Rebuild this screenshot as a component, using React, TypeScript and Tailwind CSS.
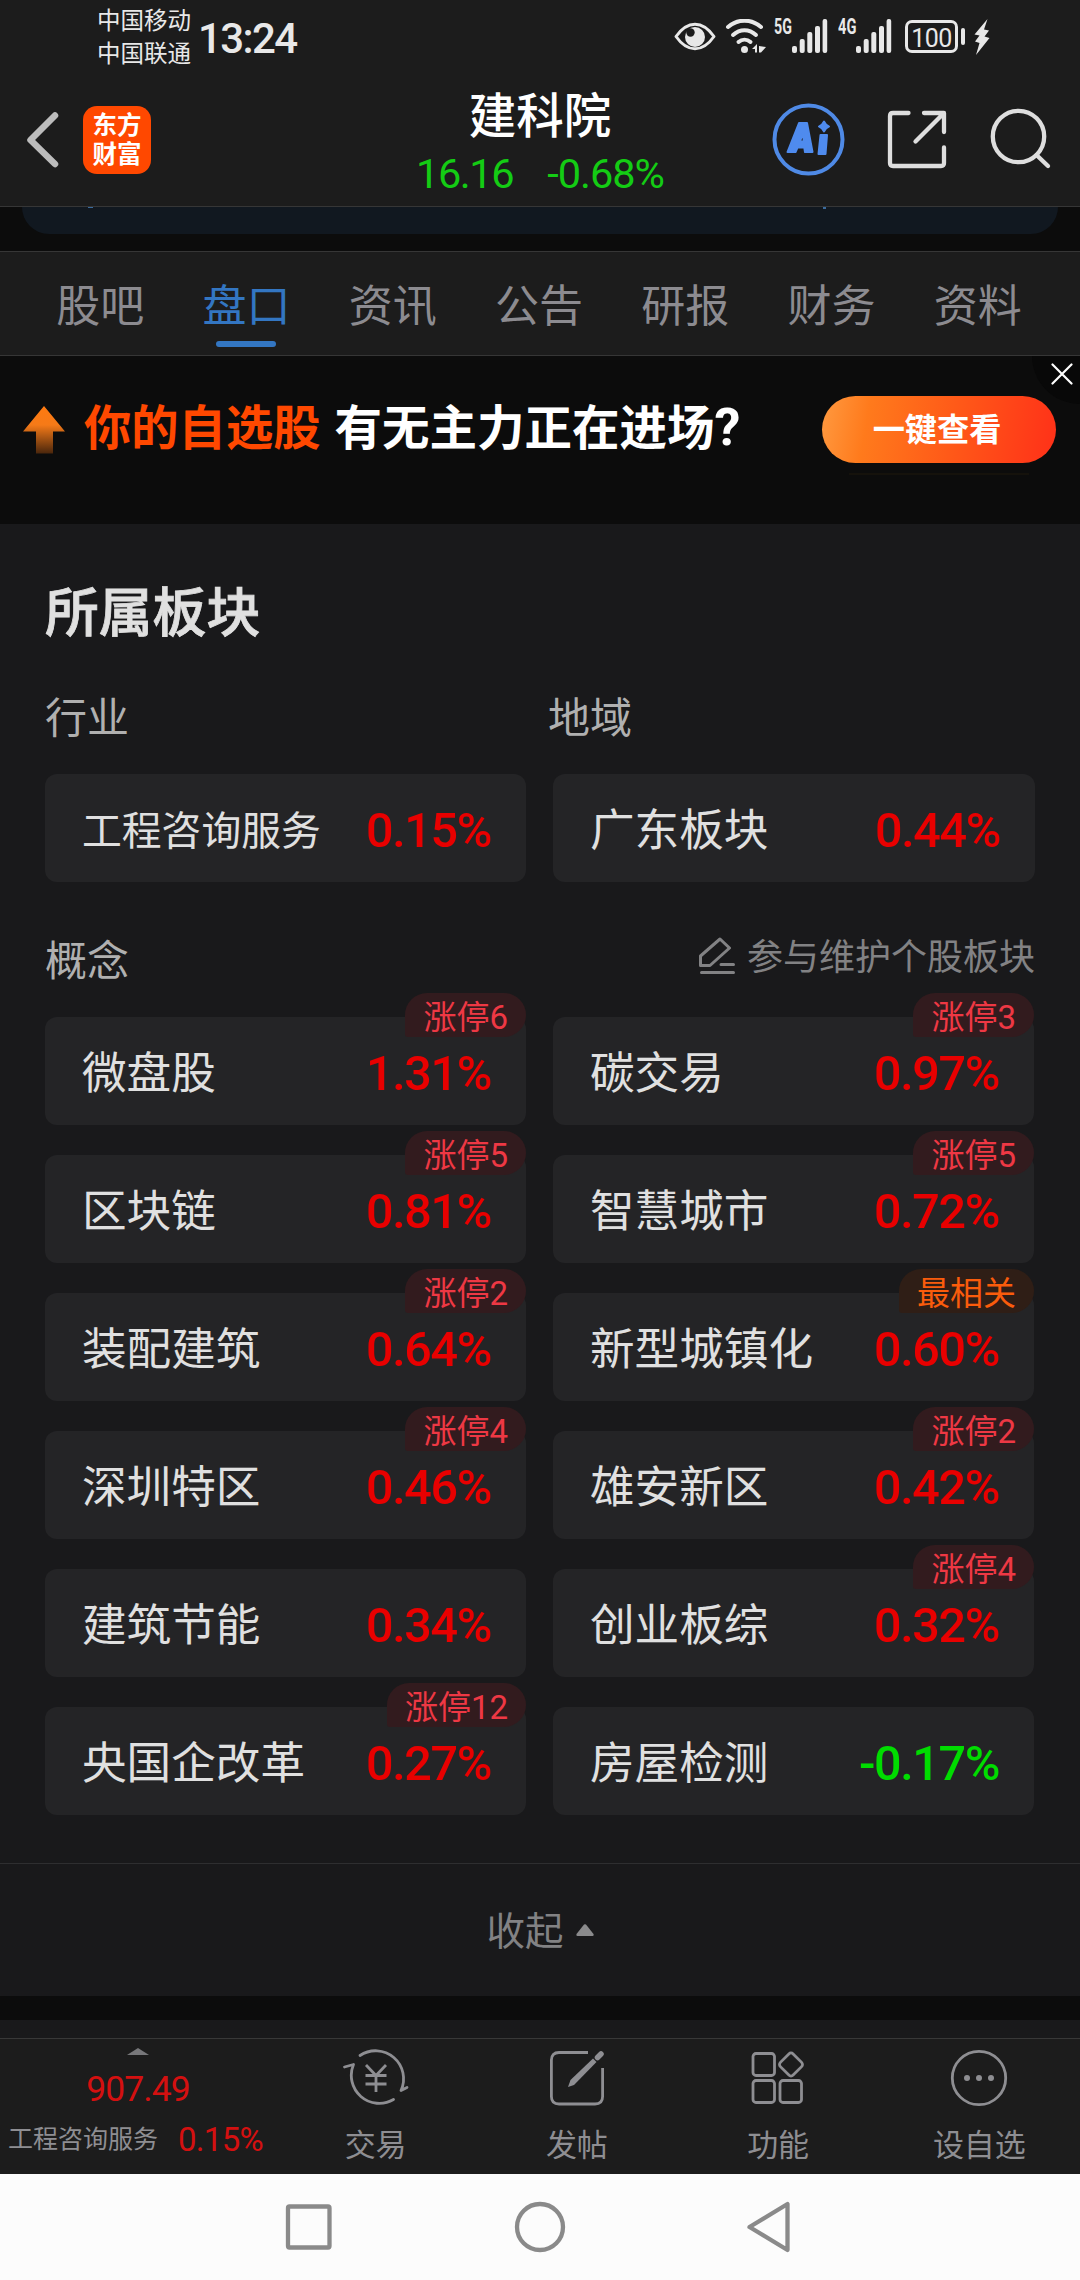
import React from 'react';

type Board = {
  name: string;
  change: string;
  tag?: string;
  hot?: boolean;
};

const tabs = ['股吧', '盘口', '资讯', '公告', '研报', '财务', '资料'];

const concepts: Board[] = [
  { name: '微盘股', change: '1.31%', tag: '涨停6' },
  { name: '碳交易', change: '0.97%', tag: '涨停3' },
  { name: '区块链', change: '0.81%', tag: '涨停5' },
  { name: '智慧城市', change: '0.72%', tag: '涨停5' },
  { name: '装配建筑', change: '0.64%', tag: '涨停2' },
  { name: '新型城镇化', change: '0.60%', tag: '最相关', hot: true },
  { name: '深圳特区', change: '0.46%', tag: '涨停4' },
  { name: '雄安新区', change: '0.42%', tag: '涨停2' },
  { name: '建筑节能', change: '0.34%' },
  { name: '创业板综', change: '0.32%', tag: '涨停4' },
  { name: '央国企改革', change: '0.27%', tag: '涨停12' },
  { name: '房屋检测', change: '-0.17%' },
];

function SignalBars() {
  return (
    <svg width="36" height="34" viewBox="0 0 36 34" fill="#e8e8e8">
      <rect x="0" y="27" width="5" height="7" rx="2" />
      <rect x="7.7" y="20" width="5" height="14" rx="2" />
      <rect x="15.3" y="13" width="5" height="21" rx="2" />
      <rect x="23" y="7" width="5" height="27" rx="2" />
      <rect x="30.6" y="0" width="4.6" height="34" rx="2" />
    </svg>
  );
}

function StatusBar() {
  return (
    <div className="flex h-[74px] items-start text-[#e8e8e8]">
      <div className="ml-[97px] mt-[5px] text-[23.5px] leading-[33px]">
        <div>中国移动</div>
        <div>中国联通</div>
      </div>
      <div className="ml-[7px] mt-[15px] text-[42px] leading-[48px] font-medium tracking-[-1.6px]">13:24</div>
      <div className="ml-auto mr-[90px] mt-[19px] flex items-start">
        <svg className="mt-[3px]" width="42" height="29" viewBox="0 0 42 29" fill="none">
          <path d="M2 14.5C8 6 14 2.200 21 2.200S34 6 40 14.500C34 23 28 26.800 21 26.800S8 23 2 14.500Z" stroke="#e8e8e8" strokeWidth="3" strokeLinejoin="round" />
          <circle cx="21" cy="15" r="10" fill="#e8e8e8" />
          <circle cx="16.500" cy="10.500" r="4.200" fill="#1c1c1c" />
        </svg>
        <svg className="ml-[9px]" width="42" height="35" viewBox="0 0 42 35" fill="none" stroke="#e8e8e8" strokeWidth="4" strokeLinecap="round">
          <path d="M3 8C13-.5 26-.5 36 8" />
          <path d="M8 16C15 9.500 24 9.500 31 16" />
          <path d="M13.500 23C17 20 22 20 25.500 23" />
          <circle cx="19.500" cy="30.500" r="3.500" fill="#e8e8e8" stroke="none" />
          <path d="M27 30L32 25V33.500H30V30ZM34 27L41 28L36 33.500H34Z" fill="#e8e8e8" stroke="none" />
        </svg>
        <div className="ml-[7px] -mt-[2px] w-[18px] origin-left scale-x-[0.66] text-[21.500px] leading-[20px] font-bold">5G</div>
        <SignalBars />
        <div className="ml-[10px] -mt-[2px] w-[18px] origin-left scale-x-[0.68] text-[21.500px] leading-[20px] font-bold">4G</div>
        <SignalBars />
        <div className="ml-[13px] mt-[1px] flex h-[33px] w-[53px] items-center justify-center rounded-[7px] border-3 border-[#e8e8e8] pt-[3px] text-[25px] leading-none tracking-[-0.5px]">
          100
        </div>
        <div className="ml-[3px] mt-[9px] h-[17px] w-[4px] rounded-sm bg-[#e8e8e8]" />
        <svg className="ml-[9px]" width="16" height="36" viewBox="0 0 16 36" fill="#e8e8e8">
          <path d="M13.500 0L.5 15.500L5.500 16.500L1 22.500L5.500 24L2 36L15.500 19L10.500 17.500L15 11.500L10 10.500Z" />
        </svg>
      </div>
    </div>
  );
}

function Header() {
  return (
    <div className="flex h-[132px] items-start">
      <svg className="ml-[26px] mt-[37px]" width="34" height="58" viewBox="0 0 34 58" fill="none" stroke="#bcbcbc" strokeWidth="6.500" strokeLinecap="round" strokeLinejoin="round">
        <path d="M29 4.500L4.500 29L29 53" />
      </svg>
      <div className="ml-[23px] mt-[32px] flex h-[68px] w-[68px] flex-col items-center justify-center rounded-[14px] bg-[#ff4800] pb-px text-[24.500px] leading-[29px] font-bold text-white">
        <div>东方</div>
        <div>财富</div>
      </div>
      <div className="ml-[251px] w-[276px] text-center">
        <div className="mt-[15px] text-[47.500px] leading-[56px] font-medium text-white">建科院</div>
        <div className="mt-[5px] flex justify-center gap-[34px] text-[41.500px] leading-[48px] tracking-[-1px] text-[#14cc14]">
          <span className="tracking-[-1.4px]">16.16</span>
          <span>-0.68%</span>
        </div>
      </div>
      <svg className="ml-[93px] mt-[28px]" width="76" height="76" viewBox="0 0 76 76" fill="none">
        <circle cx="37.500" cy="37.500" r="34" stroke="#4f8ae6" strokeWidth="4" />
        <g fill="#4f8bee" stroke="#4f8bee" strokeWidth="2" strokeLinejoin="round">
          <path fillRule="evenodd" d="M28 21H36L41.500 50H34L33.300 45.500H26.500L24.500 50H16.500ZM32 31L29 39.500H32.800Z" />
          <path d="M49.500 33H56L54.500 52H47.500Z" />
          <path d="M53 19.500L55 22.500L58 24.500L55 26.500L53 29.500L51 26.500L48 24.500L51 22.500Z" />
        </g>
      </svg>
      <svg className="ml-[40px] mt-[36px]" width="60" height="60" viewBox="0 0 60 60" fill="none" stroke="#dedede" strokeWidth="4.300" strokeLinecap="round" strokeLinejoin="round">
        <path d="M21.500 3H6Q3 3 3 6V53Q3 56 6 56H54Q57 56 57 53V37.500M37 3H57V22M56 4L28.500 31.500" />
      </svg>
      <svg className="ml-[43px] mt-[34px]" width="62" height="62" viewBox="0 0 62 62" fill="none" stroke="#dedede" strokeWidth="4.300" strokeLinecap="round">
        <circle cx="28.500" cy="28.500" r="25.700" />
        <path d="M46.500 47L58 58" />
      </svg>
    </div>
  );
}

function PromoBanner() {
  return (
    <div className="relative flex h-[168px] overflow-hidden bg-[#0c0c0c] font-bold">
      <svg className="ml-[22px] mt-[50px]" width="44" height="48" viewBox="0 0 44 48">
        <defs>
          <linearGradient id="arrow" x1="0" y1="0" x2="0" y2="1">
            <stop offset="0" stopColor="#ff7a10" />
            <stop offset="0.4" stopColor="#f57a18" />
            <stop offset="1" stopColor="#4a260c" />
          </linearGradient>
        </defs>
        <path d="M22 0L43 25.500H31V47.500H14V25.500H1Z" fill="url(#arrow)" />
      </svg>
      <div className="ml-[18px] mt-[45px] text-[47.300px] leading-[56px] whitespace-nowrap text-[#ff4800]">你的自选股</div>
      <div className="ml-[14px] mt-[45px] w-[440px] text-[47.500px] leading-[56px] whitespace-nowrap text-white">
        有无主力正在进场<span className="text-[52px] leading-none">?</span>
      </div>
      <div className="ml-auto mr-[24px] mt-[40px]">
        <div className="flex h-[67px] w-[234px] items-center justify-center rounded-full bg-[linear-gradient(100deg,#ff9a40_0%,#ff7a1c_20%,#ff5a18_55%,#ff3018_100%)] pt-[2px] pr-[4px] text-[32.200px] leading-none text-white">
          一键查看
        </div>
        <div className="mx-auto mt-[10px] h-[2px] w-[180px] bg-[#15120c]" />
      </div>
      <div className="absolute -top-[48px] -right-[48px] h-24 w-24 rounded-full bg-[#080808]" />
      <svg className="absolute top-[7px] right-[7px]" width="22" height="22" viewBox="0 0 22 22" stroke="#fff" strokeWidth="2.200" strokeLinecap="round">
        <path d="M1.500 1.500L20.500 20.500M20.500 1.500L1.500 20.500" />
      </svg>
    </div>
  );
}

function BoardCard({ board, small }: { board: Board; small?: boolean }) {
  return (
    <div className="relative flex h-[108px] items-center justify-between rounded-xl bg-[#242426] pt-[4px] pr-[35px] pl-[37px]">
      <span className={small ? 'pt-[3px] text-[39.800px] leading-none text-[#e0e0e0]' : 'pt-[3px] text-[44.600px] leading-none text-[#e0e0e0]'}>
        {board.name}
      </span>
      <span
        className={`pt-[2px] text-[48.500px] leading-none font-medium tracking-[-1.4px] ${board.change.startsWith('-') ? 'text-[#00dc00]' : 'text-[#e80000]'}`}
      >
        {board.change}
      </span>
      {board.tag && (
        <div
          className={`absolute -top-[24px] right-0 flex h-[44px] items-center rounded-[22px] rounded-bl-[3px] px-[18px] pt-[5px] text-[33px] leading-none ${
            board.hot ? 'bg-[#2f1e16] text-[#fa5c0c]' : 'bg-[#321b1e] text-[#ee3844]'
          }`}
        >
          {board.tag}
        </div>
      )}
    </div>
  );
}

function BoardSection() {
  return (
    <section className="h-[1339px] bg-[#19191b] px-[45px] pt-[58px]">
      <h2 className="text-[53.800px] leading-[64px] font-medium text-[#e0e0e0] [-webkit-text-stroke:0.8px_#e0e0e0]">所属板块</h2>
      <div className="mt-[48px] grid grid-cols-[503px_1fr] text-[42px] leading-[50px] text-[#b0b0b0]">
        <div>行业</div>
        <div>地域</div>
      </div>
      <div className="mt-[30px] grid grid-cols-[481px_482px] gap-x-[27px]">
        <BoardCard board={{ name: '工程咨询服务', change: '0.15%' }} small />
        <BoardCard board={{ name: '广东板块', change: '0.44%' }} />
      </div>
      <div className="mt-[54px] flex h-[50px] items-center justify-between">
        <div className="pt-[2px] text-[42px] leading-[50px] text-[#b0b0b0]">概念</div>
        <div className="-mt-[6px] flex items-center gap-[12px] text-[36px] leading-none text-[#828284]">
          <svg className="-mt-[4px]" width="38" height="38" viewBox="0 0 38 38" fill="none" stroke="#828284" strokeWidth="3" strokeLinejoin="round" strokeLinecap="round">
            <path d="M3.500 19L23 2L32.500 11L13 28.500H3.500ZM4.500 35.500H36.500M24 27.500H36.500" />
          </svg>
          参与维护个股板块
        </div>
      </div>
      <div className="mt-[31px] grid grid-cols-[481px_481px] gap-x-[27px] gap-y-[30px]">
        {concepts.map((board) => (
          <BoardCard key={board.name} board={board} />
        ))}
      </div>
    </section>
  );
}

function BottomBar() {
  return (
    <div className="flex h-[136px] border-t border-[#383838] bg-[#1c1c1c] text-[#8e8e92]">
      <div className="flex w-[275px] flex-col">
        <svg className="ml-[127px] mt-[9px]" width="22" height="7" viewBox="0 0 22 7" fill="#77777a">
          <path d="M11 0L22 7H0Z" />
        </svg>
        <div className="mt-[14px] ml-px text-center text-[35.500px] leading-[40px] tracking-[-0.9px] text-[#d41010]">907.49</div>
        <div className="mt-[11px] ml-[8px] flex items-center text-[25px] leading-[40px]">
          工程咨询服务
          <span className="ml-[20px] text-[33px] tracking-[-0.7px] text-[#d41010]">0.15%</span>
        </div>
      </div>
      <BottomItem label="交易">
        <svg width="66" height="60" viewBox="0 0 66 60" fill="none" stroke="#8e8e92" strokeWidth="2.800" strokeLinecap="round" strokeLinejoin="round">
          <path d="M17 7.500A28 28 0 0 1 58 42.500L64 39.500" />
          <path d="M1.500 19L10.500 16.500A28 28 0 0 0 50.500 51.500" />
          <path d="M23 17L33 27.500L43 17M33 27.500V44M22.500 27.500H43.500M22.500 36H43.500" strokeLinecap="butt" />
        </svg>
      </BottomItem>
      <BottomItem label="发帖">
        <svg width="56" height="60" viewBox="0 0 56 60" fill="none" stroke="#8e8e92" strokeWidth="2.800">
          <path d="M39 4.500H10Q2.400 4.500 2.400 12V48.500Q2.400 56 10 56H46Q53.600 56 53.600 48.500V20" />
          <path d="M19 39L21.500 32L44 10.500L47.500 14L25 37Z" fill="#8e8e92" stroke="none" />
          <path d="M48.500 9.500L52 6" strokeWidth="5.500" strokeLinecap="round" />
        </svg>
      </BottomItem>
      <BottomItem label="功能">
        <svg width="54" height="60" viewBox="0 0 54 60" fill="none" stroke="#8e8e92" strokeWidth="2.800" strokeLinejoin="round">
          <rect x="2" y="5.500" width="21.500" height="22" rx="3" />
          <rect x="2" y="32.500" width="21.500" height="22" rx="3" />
          <rect x="29" y="32.500" width="21.500" height="22" rx="3" />
          <rect x="31" y="7.500" width="18" height="18" rx="3" transform="rotate(45 40 16.500)" />
        </svg>
      </BottomItem>
      <BottomItem label="设自选">
        <svg width="60" height="60" viewBox="0 0 60 60" fill="none">
          <circle cx="30" cy="30" r="26.700" stroke="#8e8e92" strokeWidth="2.800" />
          <circle cx="18" cy="30" r="3" fill="#8e8e92" />
          <circle cx="30" cy="30" r="3" fill="#8e8e92" />
          <circle cx="42" cy="30" r="3" fill="#8e8e92" />
        </svg>
      </BottomItem>
    </div>
  );
}

function BottomItem({ label, children }: { label: string; children: React.ReactNode }) {
  return (
    <div className="flex flex-1 flex-col items-center pt-[9px]">
      {children}
      <div className="mt-[18px] text-[31px] leading-[40px]">{label}</div>
    </div>
  );
}

function SystemNav() {
  return (
    <div className="flex h-[106px] items-center bg-[#fcfcfc] pl-[285px]">
      <svg width="48" height="52" viewBox="0 0 48 52" fill="none" stroke="#8a8a8a" strokeWidth="4.300">
        <rect x="3" y="5.500" width="41.500" height="41" rx="1.500" />
      </svg>
      <svg className="ml-[181px]" width="52" height="52" viewBox="0 0 52 52" fill="none" stroke="#8a8a8a" strokeWidth="4.300">
        <circle cx="26" cy="26" r="23" />
      </svg>
      <svg className="ml-[180px]" width="46" height="52" viewBox="0 0 46 52" fill="none" stroke="#8a8a8a" strokeWidth="4.300" strokeLinejoin="round">
        <path d="M41.500 3V49L3.500 26Z" />
      </svg>
    </div>
  );
}

export default function App() {
  return (
    <div className="flex h-[2280px] w-[1080px] flex-col overflow-hidden bg-[#0c0c0c] font-[Roboto,'Noto_Sans_CJK_SC',sans-serif]">
      <header className="bg-[#1c1c1c]">
        <StatusBar />
        <Header />
      </header>
      <div className="h-[45px] border-t border-[#363636] px-[22px]">
        <div className="flex h-[27px] justify-between rounded-b-[40px] bg-[#111820] pr-[232px] pl-[66px]">
          <div className="h-px w-[5px] bg-[#3a6a9c]" />
          <div className="h-[2px] w-[3px] bg-[#3a6a9c]" />
        </div>
      </div>
      <nav className="flex h-[105px] border-y border-[#363636] bg-[#1c1c1c] pr-[29px] pl-[27px] text-[44px] text-[#8c8b90]">
        {tabs.map((tab) => (
          <div
            key={tab}
            className={tab === '盘口' ? 'flex flex-1 flex-col items-center pt-[27px] text-[#3376c2]' : 'flex flex-1 flex-col items-center pt-[27px]'}
          >
            <div className="leading-[56px]">{tab}</div>
            {tab === '盘口' && <div className="mt-[6px] h-[6px] w-[60px] rounded-full bg-[#3376c2]" />}
          </div>
        ))}
      </nav>
      <PromoBanner />
      <BoardSection />
      <div className="flex h-[133px] items-center justify-center gap-[12px] border-t border-[#2e2e30] bg-[#19191b] text-[38.500px] leading-none text-[#828284]">
        <span className="pt-[4px]">收起</span>
        <svg width="18" height="12" viewBox="0 0 18 12" fill="#8a8a8c">
          <path d="M8 .6Q9 -.3 10 .6L17.500 10Q18 12 16.500 12H1.500Q0 12 .5 10Z" />
        </svg>
      </div>
      <div className="mt-6 h-[18px] bg-[#19191b]" />
      <BottomBar />
      <SystemNav />
    </div>
  );
}
